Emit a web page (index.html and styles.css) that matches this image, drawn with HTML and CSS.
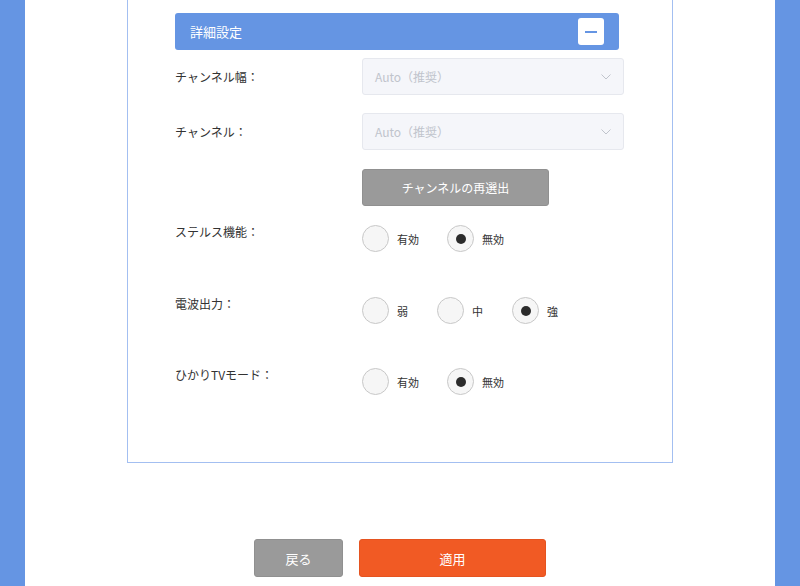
FILE: index.html
```html
<!DOCTYPE html>
<html lang="ja">
<head>
<meta charset="utf-8">
<link rel="stylesheet" href="styles.css">
</head>
<body>
<div class="page">
  <div class="panel">
    <div class="section-head">
      <span class="section-title">詳細設定</span>
      <span class="collapse-btn"><span class="minus"></span></span>
    </div>
    <div class="row row-select first">
      <div class="label">チャンネル幅：</div>
      <div class="select">
        <span class="select-value">Auto（推奨）</span>
        <svg class="chevron" width="10" height="6" viewBox="0 0 10 6"><path d="M0.5 0.5 L5 5 L9.5 0.5" fill="none" stroke="#c0c4cc" stroke-width="1"/></svg>
      </div>
    </div>
    <div class="row row-select second">
      <div class="label">チャンネル：</div>
      <div class="select">
        <span class="select-value">Auto（推奨）</span>
        <svg class="chevron" width="10" height="6" viewBox="0 0 10 6"><path d="M0.5 0.5 L5 5 L9.5 0.5" fill="none" stroke="#c0c4cc" stroke-width="1"/></svg>
      </div>
    </div>
    <div class="row row-button">
      <div class="label"></div>
      <div class="gray-btn">チャンネルの再選出</div>
    </div>
    <div class="row row-radio stealth">
      <div class="label">ステルス機能：</div>
      <div class="radios wide">
        <label class="radio"><span class="circle"></span><span class="radio-text">有効</span></label>
        <label class="radio"><span class="circle checked"></span><span class="radio-text">無効</span></label>
      </div>
    </div>
    <div class="row row-radio power">
      <div class="label">電波出力：</div>
      <div class="radios narrow">
        <label class="radio"><span class="circle"></span><span class="radio-text">弱</span></label>
        <label class="radio"><span class="circle"></span><span class="radio-text">中</span></label>
        <label class="radio"><span class="circle checked"></span><span class="radio-text">強</span></label>
      </div>
    </div>
    <div class="row row-radio hikari">
      <div class="label">ひかりTVモード：</div>
      <div class="radios wide">
        <label class="radio"><span class="circle"></span><span class="radio-text">有効</span></label>
        <label class="radio"><span class="circle checked"></span><span class="radio-text">無効</span></label>
      </div>
    </div>
  </div>
  <div class="actions">
    <div class="btn back">戻る</div>
    <div class="btn apply">適用</div>
  </div>
</div>
</body>
</html>
```
FILE: styles.css
```css
html, body {
  margin: 0;
  padding: 0;
}
body {
  background: #6595e3;
  font-family: "Noto Sans CJK JP", "Noto Sans", sans-serif;
  color: #333;
  height: 586px;
  overflow: hidden;
}
.page {
  margin: 0 25px;
  background: #fff;
  height: 586px;
  padding-left: 102px;
  box-sizing: border-box;
}
.panel {
  width: 546px;
  box-sizing: border-box;
  border: 1px solid #a3bff1;
  border-top: none;
  padding: 13px 0 67px 47px;
}
.section-head {
  width: 444px;
  height: 37px;
  box-sizing: border-box;
  background: #6595e3;
  border-radius: 3px;
  display: flex;
  align-items: center;
  justify-content: space-between;
  padding: 0 15px 0 15px;
}
.section-title {
  color: #fff;
  font-size: 13px;
  line-height: 16px;
}
.collapse-btn {
  width: 26px;
  height: 27px;
  background: #fff;
  border-radius: 3px;
  display: flex;
  align-items: center;
  justify-content: center;
}
.minus {
  width: 12px;
  height: 2px;
  background: #6595e3;
}
.row {
  display: flex;
}
.label {
  width: 187px;
  flex: none;
  font-size: 12px;
  line-height: 16px;
  color: #333;
}
.row-select {
  align-items: center;
}
.row-select.first { margin-top: 8px; }
.row-select.second { margin-top: 18px; }
.select {
  width: 262px;
  height: 37px;
  box-sizing: border-box;
  background: #f5f6fa;
  border: 1px solid #e6e8ee;
  border-radius: 3px;
  display: flex;
  align-items: center;
  justify-content: space-between;
  padding: 0 12px 0 12px;
}
.select-value {
  font-size: 12px;
  color: #c0c4cc;
}
.chevron {
  display: block;
}
.row-button { margin-top: 19px; }
.gray-btn {
  width: 187px;
  height: 37px;
  box-sizing: border-box;
  background: #9a9a9a;
  border: 1px solid #909090;
  border-radius: 3px;
  color: #fff;
  font-size: 12px;
  display: flex;
  align-items: center;
  justify-content: center;
}
.row-radio { align-items: flex-start; }
.row-radio .label { line-height: 14px; }
.stealth { margin-top: 19px; }
.power { margin-top: 45px; }
.hikari { margin-top: 44px; }
.radios {
  display: flex;
}
.radios.wide { gap: 28px; }
.radios.narrow { gap: 29px; }
.radio {
  display: flex;
  align-items: center;
}
.circle {
  width: 27px;
  height: 27px;
  box-sizing: border-box;
  border: 1px solid #c8c8c8;
  border-radius: 50%;
  background: #f6f6f6;
  display: flex;
  align-items: center;
  justify-content: center;
}
.circle.checked::after {
  content: "";
  width: 10px;
  height: 10px;
  border-radius: 50%;
  background: #2b2b2b;
}
.radio-text {
  margin-left: 8px;
  font-size: 11px;
  color: #333;
}
.actions {
  display: flex;
  gap: 16px;
  margin-top: 76px;
  padding-left: 127px;
}
.btn {
  height: 38px;
  box-sizing: border-box;
  border-radius: 3px;
  color: #fff;
  font-size: 13px;
  display: flex;
  align-items: center;
  justify-content: center;
}
.btn.back {
  width: 89px;
  background: #9a9a9a;
  border: 1px solid #909090;
}
.btn.apply {
  width: 187px;
  background: #f15a24;
  border: 1px solid #e55320;
}
```
